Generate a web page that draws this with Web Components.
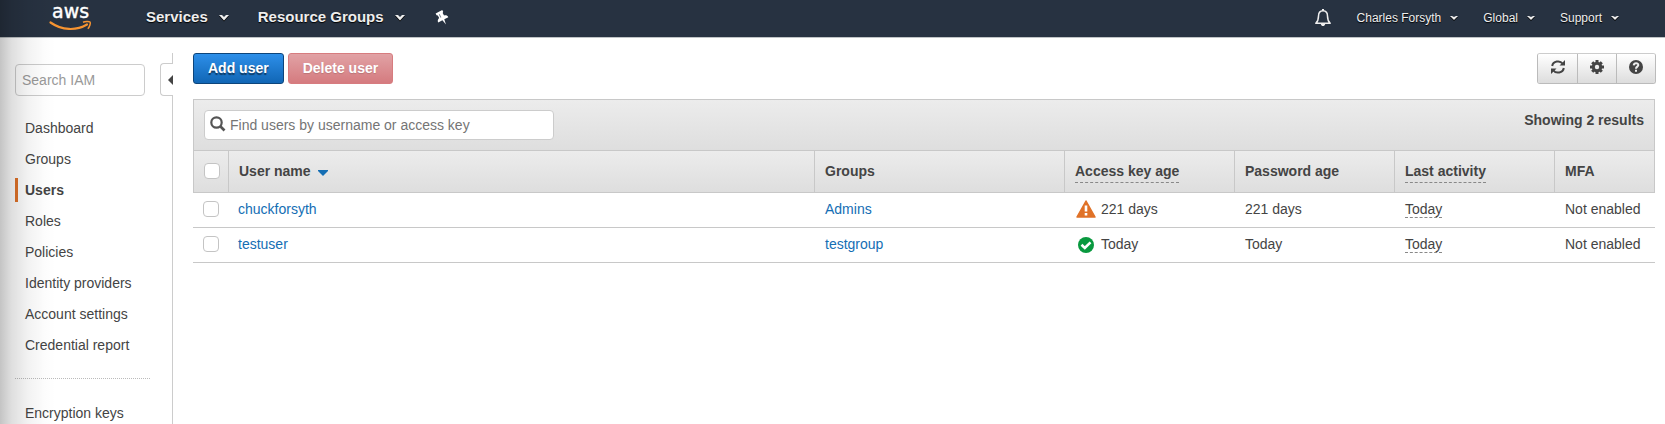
<!DOCTYPE html>
<html lang="en">
<head>
<meta charset="utf-8">
<title>IAM - Users</title>
<style>
  html, body { margin: 0; height: 100%; background: #fff; }
  body { font: 14px/20px "Liberation Sans", Arial, sans-serif; color: #444; }
</style>
</head>
<body>
<iam-app>
  <console-nav slot="nav">
    <nav-menu slot="start" large>Services</nav-menu>
    <nav-menu slot="start" large>Resource Groups</nav-menu>
    <nav-menu slot="end">Charles Forsyth</nav-menu>
    <nav-menu slot="end">Global</nav-menu>
    <nav-menu slot="end">Support</nav-menu>
  </console-nav>
  <side-bar slot="side">
    <side-link>Dashboard</side-link>
    <side-link>Groups</side-link>
    <side-link current>Users</side-link>
    <side-link>Roles</side-link>
    <side-link>Policies</side-link>
    <side-link>Identity providers</side-link>
    <side-link>Account settings</side-link>
    <side-link>Credential report</side-link>
    <side-link slot="extra">Encryption keys</side-link>
  </side-bar>
  <action-bar>
    <action-button kind="primary">Add user</action-button>
    <action-button kind="danger" disabled>Delete user</action-button>
    <icon-group slot="end"></icon-group>
  </action-bar>
  <user-table></user-table>
</iam-app>

<script>
const define = (name, html, setup) => {
  const template = document.createElement('template');
  template.innerHTML = html;
  customElements.define(name, class extends HTMLElement {
    constructor() {
      super();
      this.attachShadow({ mode: 'open' }).append(template.content.cloneNode(true));
    }
    connectedCallback() { if (setup) setup(this, this.shadowRoot); }
  });
};

define('iam-app', `
<style>
  :host { display: grid; grid-template: auto minmax(0, 1fr) / auto minmax(0, 1fr); height: 100vh; position: relative; overflow: hidden; }
  .nav { grid-column: 1 / 3; }
  .side { overflow: hidden; }
  main { padding: 15px 10px 20px 20px; display: flex; flex-direction: column; gap: 15px; overflow: auto; }
  /* soft shade along the window's left edge */
  .shade { position: absolute; inset: 0 auto 0 0; width: 56px; pointer-events: none;
    background: linear-gradient(90deg, rgba(0,0,0,.23), rgba(0,0,0,.13) 20%, rgba(0,0,0,.05) 50%, rgba(0,0,0,.01) 80%, transparent); }
</style>
<div class="nav"><slot name="nav"></slot></div>
<div class="side"><slot name="side"></slot></div>
<main><slot></slot></main>
<div class="shade"></div>`);

define('console-nav', `
<style>
  :host { display: block; background: #273241; border-bottom: 1px solid #bfc3c6; color: #eee; }
  nav { height: 37px; box-sizing: border-box; display: flex; align-items: center; justify-content: space-between; padding: 0 46px 1px 50px; }
  .group { display: flex; align-items: center; height: 34px; }
  .start { gap: 29px; }
  .end { gap: 25px; }
  .logo { display: block; width: 42px; height: 32px; margin-right: 25px; }
  .logo svg, button svg { display: block; }
  .logo svg { overflow: visible; }
  .logo text { font: 19px "DejaVu Sans", sans-serif; fill: #fff; stroke: #fff; stroke-width: .4; }
  button { border: 0; padding: 0; background: none; color: inherit; }
</style>
<nav>
  <div class="group start">
    <a class="logo" href="#" aria-label="AWS home"><svg width="42" height="32" viewBox="0 0 42 32">
      <text x="2" y="16">aws</text>
      <path d="M.5 20.500C12 28.500 26 29 37 22.500" fill="none" stroke="#f79431" stroke-width="2.200" stroke-linecap="round"/>
      <path d="M33 20.200c2-.9 6-1.100 7-.2.900 1-.3 5-2.200 6.800" fill="none" stroke="#f79431" stroke-width="1.500"/>
    </svg></a>
    <slot name="start"></slot>
    <button type="button" aria-label="Pinned shortcuts"><svg width="18" height="18" viewBox="0 0 18 18">
      <g transform="rotate(-28 8 9)"><path fill="#fff" d="M4.500 2H12v2l-1 .8v2.900c2 .6 3 1.700 3 3.500H9.400L8.500 16.500 7.300 11.200H2.500c0-1.800 1.100-2.900 3-3.500V4.800l-1-.8z"/><path stroke="#7b8592" d="M7.300 4.500v3.500"/></g>
    </svg></button>
  </div>
  <div class="group end">
    <button type="button" aria-label="Notifications"><svg width="18" height="20" viewBox="0 0 18 20">
      <path fill="none" stroke="#eee" stroke-width="1.500" stroke-linejoin="round" d="M9 2.700C5.800 2.700 4.500 5 4.500 8c0 4-.9 5.700-2.700 7.300h14.400C14.400 13.700 13.500 12 13.500 8c0-3-1.300-5.300-4.500-5.300z"/>
      <path fill="#eee" d="M8 1h2v2H8zM6.800 16h4.400c-.3 1.500-1.100 2-2.200 2s-1.900-.5-2.200-2z"/></svg></button>
    <slot name="end"></slot>
  </div>
</nav>`);

define('nav-menu', `
<style>
  :host { display: block; }
  button { display: flex; align-items: center; gap: 9px; border: 0; padding: 0; background: none; color: #eee;
    font: 12px/16px "Liberation Sans", Arial, sans-serif; text-shadow: 0 1px 1px #000; }
  svg { display: block; filter: drop-shadow(0 1px 0 #000); }
  .big { display: none; }
  :host([large]) button { gap: 11px; padding-bottom: 3px; font-weight: bold; font-size: 15px; }
  :host([large]) .big { display: block; margin-top: 2px; }
  :host([large]) .small { display: none; }
</style>
<button type="button"><slot></slot>
  <svg class="small" width="8" height="6" viewBox="0 0 8 6"><path fill="#eee" d="M0 1h2l2 1 2-1h2L4 5z"/></svg>
  <svg class="big" width="10" height="6" viewBox="0 0 10 6"><path fill="#eee" d="M0 0h3l2 2 2-2h3L5 5.500z"/></svg>
</button>`);

define('side-bar', `
<style>
  :host { display: flex; width: 173px; padding-top: 15px; }
  .content { flex: 1; padding: 11px 14px 0 15px; }
  input { box-sizing: border-box; width: 130px; height: 32px; display: block; margin: 0 0 20px; padding: 0 6px; border: 1px solid #ccc; border-radius: 4px; background: #fff; font: inherit; color: #444; }
  input::placeholder { color: #999; }
  nav { display: flex; flex-direction: column; gap: 7px; }
  hr { margin: 21px -4px 22px 0; border: 0; border-top: 1px dotted #bbb; }
  .edge { width: 13px; display: flex; flex-direction: column; }
  .line { border-right: 1px solid #ccc; height: 10px; }
  .rest { flex: 1; }
  button { height: 33px; box-sizing: border-box; padding: 0; border: 1px solid #ccc; border-right: 0; border-radius: 4px 0 0 4px; background: #fff; display: flex; align-items: center; justify-content: flex-end; }
  svg { display: block; }
</style>
<div class="content">
  <input type="search" placeholder="Search IAM" aria-label="Search IAM">
  <nav><slot></slot></nav>
  <hr>
  <nav><slot name="extra"></slot></nav>
</div>
<div class="edge">
  <div class="line"></div>
  <button type="button" aria-label="Collapse sidebar"><svg width="5" height="10" viewBox="0 0 5 10"><path fill="#444" d="M5 0v10L0 5z"/></svg></button>
  <div class="line rest"></div>
</div>`);

define('side-link', `
<style>
  :host { display: block; }
  a { display: block; padding-left: 7px; border-left: 3px solid transparent; line-height: 24px; color: #444; text-decoration: none; white-space: nowrap; }
  :host([current]) a { font-weight: bold; border-color: #e07228; }
</style>
<a href="#"><slot></slot></a>`, (host, root) => {
  if (host.hasAttribute('current')) root.querySelector('a').setAttribute('aria-current', 'page');
});

define('action-bar', `
<style>
  :host { display: flex; justify-content: space-between; margin-right: -1px; }
  div { display: flex; gap: 4px; }
</style>
<div><slot></slot></div><slot name="end"></slot>`);

define('action-button', `
<style>
  :host { display: block; }
  button { box-sizing: border-box; height: 31px; padding: 0 14px 2px; border: 1px solid #0d457b; border-radius: 3px; color: #fff;
    font: bold 14px/20px "Liberation Sans", Arial, sans-serif; background: linear-gradient(#2d8fe9, #1166b5); text-shadow: 0 2px 1px rgba(0,0,0,.5); }
  :host([kind="danger"]) button { border-color: #d77c7f; background: linear-gradient(#e1a2a5, #d57b7f); text-shadow: 0 1px 1px rgba(0,0,0,.15); }
</style>
<button type="button"><slot></slot></button>`, (host, root) => {
  root.querySelector('button').disabled = host.hasAttribute('disabled');
});

define('icon-group', `
<style>
  :host { display: flex; border: 1px solid #bbb; border-top-color: #ccc; border-radius: 3px; overflow: hidden; box-sizing: border-box; height: 31px; }
  button { box-sizing: border-box; width: 39px; padding: 0 0 3px; border: 0; background: linear-gradient(#fff, #ddd); display: grid; place-items: center; }
  button + button { border-left: 1px solid #bbb; }
  button:first-child { width: 38px; }
  svg { display: block; }
</style>
<button type="button" aria-label="Refresh"><svg width="14" height="14" viewBox="0 0 14 14"><path fill="none" stroke="#444" stroke-width="2" d="M1.200 6C2 1 9 0 11.500 3.500M12.800 8C12 13 5 14 2.500 10.500"/><path fill="#444" d="M14 0v5.500H8.500zM0 14V8.500h5.500z"/></svg></button>
<button type="button" aria-label="Settings"><svg width="14" height="14" viewBox="0 0 14 14"><g stroke="#444" stroke-width="3"><path d="M7 0v14M0 7h14M2.200 2.200l9.600 9.600M11.800 2.200l-9.600 9.600"/></g><circle cx="7" cy="7" r="5.200" fill="#444"/><circle cx="7" cy="7" r="2.200" fill="#eee"/></svg></button>
<button type="button" aria-label="Help"><svg width="14" height="14" viewBox="0 0 14 14"><circle cx="7" cy="7" r="7" fill="#444"/><path fill="none" stroke="#eee" stroke-width="2" d="M4.700 5.300C5 2.500 9.500 2.700 9.300 5.200 9.200 6.700 7 6.600 7 8.700"/><path fill="#eee" d="M6 9.800h2v2H6z"/></svg></button>`);

define('user-check', `
<style>
  :host { display: block; }
  input { appearance: none; display: block; box-sizing: border-box; width: 16px; height: 16px; margin: 0; border: 1px solid #c4c4c4; border-radius: 4px; background: #fff; }
</style>
<input type="checkbox">`, (host, root) => {
  root.querySelector('input').setAttribute('aria-label', host.getAttribute('label'));
});

define('key-status', `
<style>
  :host { display: flex; align-items: center; gap: 5px; padding-left: 1px; }
  svg { display: none; flex: none; }
  :host([state="warn"]) .warn, :host([state="ok"]) .ok { display: block; }
</style>
<svg class="warn" width="20" height="18" viewBox="0 0 20 18"><path fill="#e07228" stroke="#e07228" stroke-width="1.500" stroke-linejoin="round" d="M10 1l9 16H1z"/><path fill="none" stroke="#fff" stroke-width="2.600" d="M10 5.500v6M10 13v2.500"/></svg>
<svg class="ok" width="20" height="18" viewBox="0 0 20 18"><circle cx="10" cy="10" r="8" fill="#09993f"/><path fill="none" stroke="#fff" stroke-width="2.600" d="M5.500 9.800l3.300 3.200 5.700-5.700"/></svg>
<span><slot></slot></span>`);

define('user-table', `
<style>
  :host { display: block; }
  .bar { display: flex; justify-content: space-between; box-sizing: border-box; height: 51px; padding: 10px 10px 0; border: 1px solid #c8c8c8; border-bottom: 0; background: linear-gradient(#ececec, #dedede); }
  .find { display: flex; align-items: center; box-sizing: border-box; width: 350px; height: 30px; border: 1px solid #ccc; border-radius: 4px; background: #fff; padding-left: 5px; gap: 4px; }
  .find svg { margin-bottom: 3px; }
  .find input { flex: 1; border: 0; padding: 0; outline: 0; background: none; font: inherit; color: #444; }
  .find input::placeholder { color: #757575; }
  table { width: 100%; table-layout: fixed; border-collapse: separate; border-spacing: 0; }
  th, td { box-sizing: border-box; padding: 0 10px; text-align: left; white-space: nowrap; border-bottom: 1px solid #c8c8c8; }
  th { height: 43px; padding-bottom: 1px; border-top: 1px solid #c8c8c8; border-right: 1px solid #c8c8c8; background: linear-gradient(#ececec, #dedede); }
  th:first-child { border-left: 1px solid #c8c8c8; }
  td { height: 35px; padding-bottom: 2px; }
  td:nth-child(2) { padding-left: 9px; }
  .key { width: 170px; } .age, .last { width: 160px; } .mfa { width: 100px; } .check { width: 36px; } .groups { width: 250px; }
  td:last-child { padding-right: 0; }
  a { color: #146eb4; text-decoration: none; }
  abbr { text-decoration: none; border-bottom: 1px dashed #888; }
  th abbr { padding-bottom: 3px; }
  .sort { margin-left: 4px; vertical-align: 0; }
</style>
<div class="bar">
  <label class="find"><svg width="16" height="16" viewBox="0 0 16 16"><circle cx="6.500" cy="6.500" r="5.200" fill="none" stroke="#555" stroke-width="2.200"/><path stroke="#555" stroke-width="2.600" d="M10 10l4.500 4.500"/></svg>
    <input type="text" placeholder="Find users by username or access key" aria-label="Find users"></label>
  <b>Showing 2 results</b>
</div>
<table>
  <colgroup><col class="check"><col><col class="groups"><col class="key"><col class="age"><col class="last"><col class="mfa"></colgroup>
  <thead><tr>
    <th><user-check label="Select all users"></user-check></th>
    <th>User name <svg class="sort" width="10" height="6" viewBox="0 0 10 6"><path fill="#146eb4" d="M0 0h10v1L5 6 0 1z"/></svg></th>
    <th>Groups</th><th><abbr>Access key age</abbr></th><th>Password age</th><th><abbr>Last activity</abbr></th><th>MFA</th>
  </tr></thead>
  <tbody></tbody>
</table>`, (host, root) => {
  const users = [
    ['chuckforsyth', 'Admins', 'warn', '221 days', '221 days'],
    ['testuser', 'testgroup', 'ok', 'Today', 'Today'],
  ];
  root.querySelector('tbody').innerHTML = users.map(([name, group, state, key, password]) => `<tr>
    <td><user-check label="Select ${name}"></user-check></td>
    <td><a href="#">${name}</a></td><td><a href="#">${group}</a></td>
    <td><key-status state="${state}">${key}</key-status></td>
    <td>${password}</td><td><abbr>Today</abbr></td><td>Not enabled</td></tr>`).join('');
});
</script>
</body>
</html>
